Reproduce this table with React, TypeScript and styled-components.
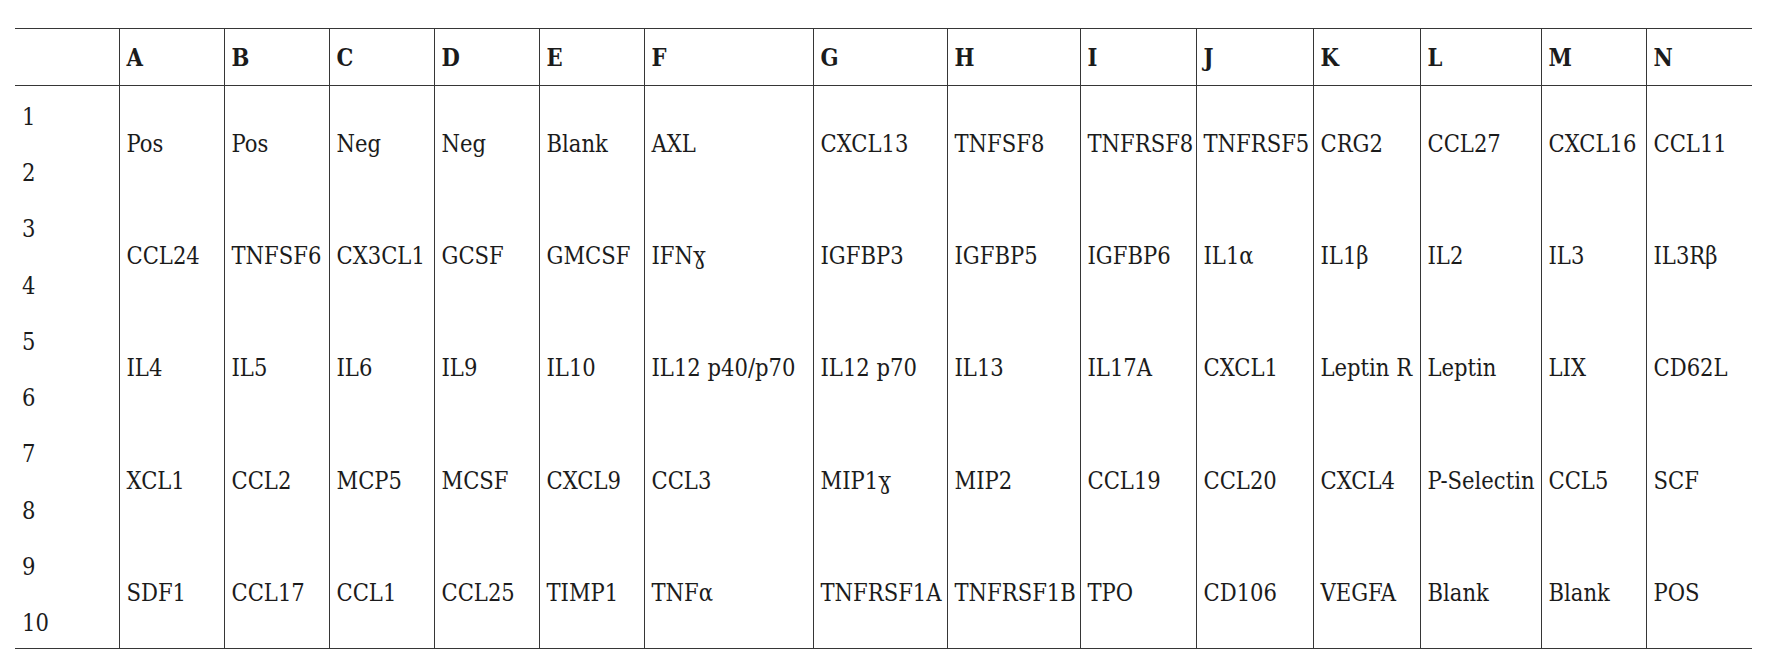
import React from "react";
import styled, { createGlobalStyle } from "styled-components";

const GlobalStyle = createGlobalStyle`
  html, body {
    margin: 0;
    padding: 0;
    background: #ffffff;
  }
`;

// column widths measured off the reference, label column first
const colWidths = [104, 105, 105, 105, 105, 105, 169, 134, 133, 116, 117, 107, 121, 105, 106];

const letters = ["A", "B", "C", "D", "E", "F", "G", "H", "I", "J", "K", "L", "M", "N"];

const rows: string[][] = [
  ["Pos", "Pos", "Neg", "Neg", "Blank", "AXL", "CXCL13", "TNFSF8", "TNFRSF8", "TNFRSF5", "CRG2", "CCL27", "CXCL16", "CCL11"],
  ["CCL24", "TNFSF6", "CX3CL1", "GCSF", "GMCSF", "IFNɣ", "IGFBP3", "IGFBP5", "IGFBP6", "IL1α", "IL1β", "IL2", "IL3", "IL3Rβ"],
  ["IL4", "IL5", "IL6", "IL9", "IL10", "IL12 p40/p70", "IL12 p70", "IL13", "IL17A", "CXCL1", "Leptin R", "Leptin", "LIX", "CD62L"],
  ["XCL1", "CCL2", "MCP5", "MCSF", "CXCL9", "CCL3", "MIP1ɣ", "MIP2", "CCL19", "CCL20", "CXCL4", "P-Selectin", "CCL5", "SCF"],
  ["SDF1", "CCL17", "CCL1", "CCL25", "TIMP1", "TNFα", "TNFRSF1A", "TNFRSF1B", "TPO", "CD106", "VEGFA", "Blank", "Blank", "POS"],
];

export default function App() {
  return (
    <Page>
      <GlobalStyle />
      <Grid>
        <colgroup>
          {colWidths.map((w, i) => (
            <col key={i} style={{ width: w }} />
          ))}
        </colgroup>
        <thead>
          <HeadRow>
            <HeadCell $first />
            {letters.map((l) => (
              <HeadCell key={l}>{l}</HeadCell>
            ))}
          </HeadRow>
        </thead>
        <tbody>
          {rows.map((row, r) => (
            <React.Fragment key={r}>
              <BodyRow>
                <Label>{r * 2 + 1}</Label>
                {row.map((item, c) => (
                  <Spot key={c} rowSpan={2}>
                    {item}
                  </Spot>
                ))}
              </BodyRow>
              <BodyRow>
                <Label>{r * 2 + 2}</Label>
              </BodyRow>
            </React.Fragment>
          ))}
        </tbody>
      </Grid>
    </Page>
  );
}

const Page = styled.div`
  padding: 28px 18px 0 15px;
`;

const Grid = styled.table`
  border-collapse: collapse;
  table-layout: fixed;
  width: 1737px;
  font-family: "DejaVu Serif Condensed", "DejaVu Serif", serif;
  font-stretch: condensed;
  font-size: 23.5px;
  color: #1b1b1b;
  border-top: 1px solid #363636;
  border-bottom: 1px solid #363636;
`;

const HeadRow = styled.tr`
  height: 57px;
  border-bottom: 1px solid #363636;
`;

const HeadCell = styled.th<{ $first?: boolean }>`
  text-align: left;
  font-weight: bold;
  padding: 1px 0 0 7px;
  white-space: nowrap;
  border-left: ${(p) => (p.$first ? "none" : "1px solid #363636")};
`;

const BodyRow = styled.tr`
  height: 56.3px;
`;

const Label = styled.td`
  padding: 6px 0 0 7px;
  white-space: nowrap;
  vertical-align: middle;
`;

const Spot = styled.td`
  padding: 3px 0 0 7px;
  white-space: nowrap;
  vertical-align: middle;
  border-left: 1px solid #363636;
`;
